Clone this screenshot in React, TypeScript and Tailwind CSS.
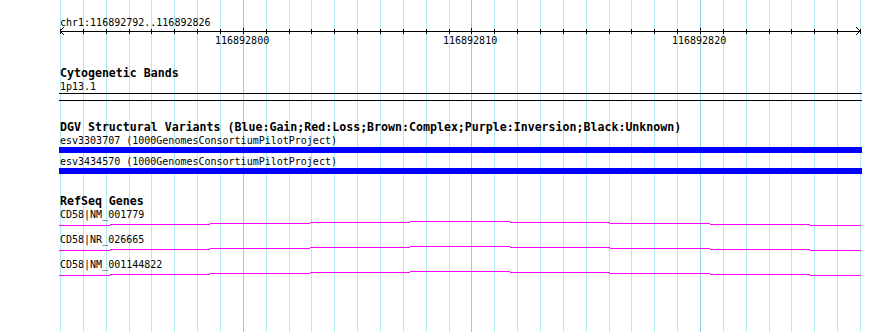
import React from 'react'

const LEFT = 60
const RIGHT = 860
const START = 116892792
const BASES = 35

const xAt = (i: number) => Math.round(LEFT + (i * (RIGHT - LEFT)) / BASES)
const ticks = Array.from({ length: BASES + 1 }, (_, i) => ({ i, pos: START + i, x: xAt(i) }))

// intron "hat" drawn as 1px steps, like the GD renderer does
const hatSteps = [
  [59, 110, 4],
  [110, 210, 3],
  [210, 310, 2],
  [310, 410, 1],
  [410, 510, 0],
  [510, 610, 1],
  [610, 710, 2],
  [710, 810, 3],
  [810, 861, 4],
]

function Grid() {
  return (
    <svg className="absolute left-0 top-0" width={890} height={332} shapeRendering="crispEdges">
      {ticks.map((t) => (
        <rect
          key={t.i}
          x={t.x}
          y={0}
          width={1}
          height={332}
          fill={t.pos % 10 === 0 ? '#8ccfe6' : '#b0e9ee'}
        />
      ))}
    </svg>
  )
}

function Ruler() {
  return (
    <div className="relative h-[19px]">
      <svg className="absolute left-0 top-[-4px]" width={890} height={12} shapeRendering="crispEdges">
        <rect x={60} y={6} width={801} height={1} fill="#000" />
        {ticks.map((t) => (
          <rect key={t.i} x={t.x} y={t.pos % 10 === 0 ? 3 : 4} width={1} height={t.pos % 10 === 0 ? 6 : 5} fill="#000" />
        ))}
        <polyline points="64,2 60,6 64,10" fill="none" stroke="#000" strokeWidth={1} />
        <polyline points="856,2 860,6 856,10" fill="none" stroke="#000" strokeWidth={1} />
      </svg>
      {ticks
        .filter((t) => t.pos % 10 === 0)
        .map((t) => (
          <span key={t.i} className="absolute top-[5px] leading-[13px]" style={{ left: t.x - 28 }}>
            {t.pos}
          </span>
        ))}
    </div>
  )
}

function Title({ children }: { children: React.ReactNode }) {
  return <div className="pl-[60px] h-[13px] leading-[13px] text-[11.6px] font-bold whitespace-nowrap">{children}</div>
}

function Label({ children }: { children: React.ReactNode }) {
  return <div className="pl-[60px] h-[13px] leading-[13px] whitespace-nowrap">{children}</div>
}

function GeneRow({ name }: { name: string }) {
  return (
    <div className="h-[25px]">
      <Label>{name}</Label>
      <svg width={890} height={5} shapeRendering="crispEdges" className="block">
        {hatSteps.map(([a, b, y]) => (
          <rect key={a} x={a} y={y} width={b - a} height={1} fill="#ff00ff" />
        ))}
      </svg>
    </div>
  )
}

export default function App() {
  return (
    <div className="relative w-[890px] h-[332px] overflow-hidden bg-white text-black text-[10px] font-['DejaVu_Sans_Mono','Liberation_Mono',monospace]">
      <Grid />
      <div className="relative pt-[16px]">
        <Label>chr1:116892792..116892826</Label>
        <Ruler />

        <div className="mt-[19px]">
          <Title>Cytogenetic Bands</Title>
          <Label>1p13.1</Label>
          <div className="ml-[59px] w-[803px] h-[8px] border-y border-black" />
        </div>

        <div className="mt-[20px]">
          <Title>DGV Structural Variants (Blue:Gain;Red:Loss;Brown:Complex;Purple:Inversion;Black:Unknown)</Title>
          <Label>esv3303707 (1000GenomesConsortiumPilotProject)</Label>
          <div className="ml-[59px] w-[803px] h-[6px] bg-[#0000ff]" />
          <div className="mt-[2px]">
            <Label>esv3434570 (1000GenomesConsortiumPilotProject)</Label>
          </div>
          <div className="ml-[59px] w-[803px] h-[6px] bg-[#0000ff]" />
        </div>

        <div className="mt-[21px]">
          <Title>RefSeq Genes</Title>
          <GeneRow name="CD58|NM_001779" />
          <GeneRow name="CD58|NR_026665" />
          <GeneRow name="CD58|NM_001144822" />
        </div>
      </div>
    </div>
  )
}
